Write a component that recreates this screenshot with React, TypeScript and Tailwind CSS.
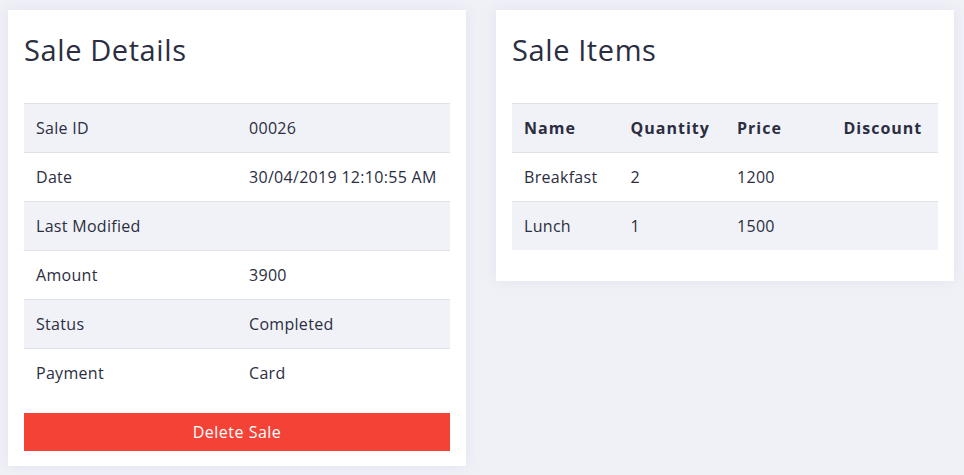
import React from 'react';

const details: [string, string][] = [
  ['Sale ID', '00026'],
  ['Date', '30/04/2019 12:10:55 AM'],
  ['Last Modified', ''],
  ['Amount', '3900'],
  ['Status', 'Completed'],
  ['Payment', 'Card'],
];

const items = [
  { name: 'Breakfast', qty: '2', price: '1200', discount: '' },
  { name: 'Lunch', qty: '1', price: '1500', discount: '' },
];

const font = { fontFamily: '"Open Sans", "Noto Sans", sans-serif' };

function Card({ title, children }: { title: string; children: React.ReactNode }) {
  return (
    <div className="bg-white px-4 pt-4 pb-[15px] shadow-[0_0_12px_rgba(200,202,230,0.35)]">
      <h2 className="h-12 text-[29px] font-normal leading-[48px] tracking-[0.6px] text-[#2b2e3f]">
        {title}
      </h2>
      <div className="mt-[29px]">{children}</div>
    </div>
  );
}

export default function App() {
  return (
    <div
      className="min-h-screen bg-[#f0f0f7] pt-[10px] pl-2 pr-[10px] text-[#2b2e3f]"
      style={font}
    >
      <div className="grid grid-cols-2 items-start gap-[30px]">
        {/* Sale details */}
        <Card title="Sale Details">
          <table className="mb-4 w-full table-fixed text-[16px] tracking-[0.3px]">
            <tbody>
              {details.map(([label, value], i) => (
                <tr
                  key={label}
                  className={`border-t border-[#dee2e6] ${i % 2 === 0 ? 'bg-[#f1f2f7]' : 'bg-white'}`}
                >
                  <td className="whitespace-nowrap px-3 py-3 leading-6">{label}</td>
                  <td className="whitespace-nowrap px-3 py-3 leading-6">{value}</td>
                </tr>
              ))}
            </tbody>
          </table>
          <button className="block h-[38px] w-full bg-[#f44336] text-[16px] tracking-[0.5px] text-white">
            Delete Sale
          </button>
        </Card>

        {/* Sale items */}
        <Card title="Sale Items">
          <table className="mb-4 w-full table-fixed text-left text-[16px] tracking-[0.3px]">
            <thead>
              <tr className="border-t border-[#dee2e6] bg-[#f1f2f7]">
                <th className="px-3 py-3 font-bold leading-6 tracking-[1px]">Name</th>
                <th className="px-3 py-3 font-bold leading-6 tracking-[1px]">Quantity</th>
                <th className="px-3 py-3 font-bold leading-6 tracking-[1px]">Price</th>
                <th className="px-3 py-3 font-bold leading-6 tracking-[1px]">Discount</th>
              </tr>
            </thead>
            <tbody>
              {items.map((it, i) => (
                <tr
                  key={it.name}
                  className={`border-t border-[#dee2e6] ${i % 2 === 1 ? 'bg-[#f1f2f7]' : 'bg-white'}`}
                >
                  <td className="px-3 py-3 leading-6">{it.name}</td>
                  <td className="px-3 py-3 leading-6">{it.qty}</td>
                  <td className="px-3 py-3 leading-6">{it.price}</td>
                  <td className="px-3 py-3 leading-6">{it.discount}</td>
                </tr>
              ))}
            </tbody>
          </table>
        </Card>
      </div>
    </div>
  );
}
